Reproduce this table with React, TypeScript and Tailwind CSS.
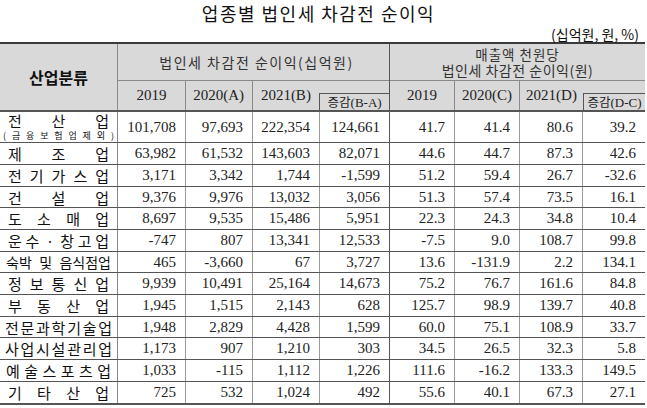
import React from "react";

const KR = '"Noto Sans CJK KR", "Noto Sans", sans-serif';
const NUM = '"Liberation Serif", "Noto Sans CJK KR", serif';

type Row = { label: React.ReactNode; h: number; v: string[] };

const spread = (chars: string[], cls = "px-[8px]") => (
  <div className={`flex w-full justify-between items-center ${cls}`}>
    {chars.map((c, i) => (
      <span key={i}>{c}</span>
    ))}
  </div>
);

const rows: Row[] = [
  {
    label: (
      <div className="flex w-full flex-col">
        {spread(["전", "산", "업"], "px-[8px] text-[15px] h-[17px] leading-[17px]")}
        {spread(["(", "금", "융", "보", "험", "업", "제", "외", ")"], "px-[3px] text-[9px] h-[13px] leading-[13px]")}
      </div>
    ),
    h: 31,
    v: ["101,708", "97,693", "222,354", "124,661", "41.7", "41.4", "80.6", "39.2"],
  },
  { label: spread(["제", "조", "업"]), h: 22, v: ["63,982", "61,532", "143,603", "82,071", "44.6", "44.7", "87.3", "42.6"] },
  { label: spread(["전", "기", "가", "스", "업"]), h: 22, v: ["3,171", "3,342", "1,744", "-1,599", "51.2", "59.4", "26.7", "-32.6"] },
  { label: spread(["건", "설", "업"]), h: 21, v: ["9,376", "9,976", "13,032", "3,056", "51.3", "57.4", "73.5", "16.1"] },
  { label: spread(["도", "소", "매", "업"]), h: 22, v: ["8,697", "9,535", "15,486", "5,951", "22.3", "24.3", "34.8", "10.4"] },
  { label: spread(["운", "수", "ㆍ", "창", "고", "업"]), h: 22, v: ["-747", "807", "13,341", "12,533", "-7.5", "9.0", "108.7", "99.8"] },
  { label: spread(["숙박", "및", "음식점업"], "px-[6px] text-[14px]"), h: 21, v: ["465", "-3,660", "67", "3,727", "13.6", "-131.9", "2.2", "134.1"] },
  { label: spread(["정", "보", "통", "신", "업"]), h: 22, v: ["9,939", "10,491", "25,164", "14,673", "75.2", "76.7", "161.6", "84.8"] },
  { label: spread(["부", "동", "산", "업"]), h: 22, v: ["1,945", "1,515", "2,143", "628", "125.7", "98.9", "139.7", "40.8"] },
  { label: spread(["전", "문", "과", "학", "기", "술", "업"], "px-[5px]"), h: 21, v: ["1,948", "2,829", "4,428", "1,599", "60.0", "75.1", "108.9", "33.7"] },
  { label: spread(["사", "업", "시", "설", "관", "리", "업"], "px-[5px]"), h: 22, v: ["1,173", "907", "1,210", "303", "34.5", "26.5", "32.3", "5.8"] },
  { label: spread(["예", "술", "스", "포", "츠", "업"], "px-[6px]"), h: 22, v: ["1,033", "-115", "1,112", "1,226", "111.6", "-16.2", "133.3", "149.5"] },
  { label: spread(["기", "타", "산", "업"]), h: 23, v: ["725", "532", "1,024", "492", "55.6", "40.1", "67.3", "27.1"] },
];

const W = [68, 67, 67, 70, 65, 65, 63, 62];
const vBorder = (i: number) =>
  i === 3 ? "border-r border-[#555]" : i === 7 ? "" : "border-r border-[#9a9a9a]";

export default function App() {
  return (
    <div className="w-[647px] h-[408px] bg-white overflow-hidden text-[#222]" style={{ fontFamily: KR }}>
      <div className="h-[26px] flex items-center justify-center pr-[10px] text-[18px] tracking-[1.5px] text-[#111]">
        업종별 법인세 차감전 순이익
      </div>
      <div className="h-[16px] flex items-center justify-end pr-[8px] text-[14px] text-[#111]">
        (십억원, 원, %)
      </div>

      <div className="w-[645px] border-t-2 border-[#3a3a3a]">
        {/* header */}
        <div className="flex h-[68px] bg-[#d9d9d9] border-b-2 border-[#555]">
          <div className="w-[118px] shrink-0 border-r border-[#8a8a8a] flex items-center justify-center text-[16px] font-bold text-[#111]">
            산업분류
          </div>
          <div className="w-[272px] shrink-0 flex flex-col border-r border-[#555]">
            <div className="h-[37px] border-b border-[#8a8a8a] flex items-center justify-center pl-[6px] text-[14px] tracking-[1.5px] text-[#333]">
              법인세 차감전 순이익(십억원)
            </div>
            <div className="flex flex-1" style={{ fontFamily: NUM }}>
              <div className="w-[68px] border-r border-[#8a8a8a] flex items-center justify-center text-[15px]">2019</div>
              <div className="w-[67px] border-r border-[#8a8a8a] flex items-center justify-center text-[15px]">2020(A)</div>
              <div className="w-[67px] flex items-center justify-center text-[15px]">2021(B)</div>
              <div className="w-[70px] flex flex-col justify-end">
                <div className="h-[17px] border-t border-l border-[#555] flex items-center justify-center text-[13px] leading-none">
                  <span style={{ fontFamily: KR }} className="text-[12.5px]">증감</span>(B-A)
                </div>
              </div>
            </div>
          </div>
          <div className="w-[255px] shrink-0 flex flex-col">
            <div className="h-[37px] border-b border-[#8a8a8a] flex flex-col items-center justify-center text-[14px] leading-[16px] text-[#333]">
              <div className="text-[13.5px] tracking-[1px]">매출액 천원당</div>
              <div className="tracking-[0.5px]">법인세 차감전 순이익(원)</div>
            </div>
            <div className="flex flex-1" style={{ fontFamily: NUM }}>
              <div className="w-[65px] border-r border-[#8a8a8a] flex items-center justify-center text-[15px]">2019</div>
              <div className="w-[65px] border-r border-[#8a8a8a] flex items-center justify-center text-[15px]">2020(C)</div>
              <div className="w-[63px] flex items-center justify-center text-[15px]">2021(D)</div>
              <div className="w-[62px] flex flex-col justify-end">
                <div className="h-[17px] border-t border-l border-[#555] flex items-center justify-center text-[13px] leading-none">
                  <span style={{ fontFamily: KR }} className="text-[12.5px]">증감</span>(D-C)
                </div>
              </div>
            </div>
          </div>
        </div>

        {/* body */}
        {rows.map((r, ri) => (
          <div
            key={ri}
            className={`flex ${ri === rows.length - 1 ? "border-b-2 border-[#555]" : "border-b border-[#555]"}`}
            style={{ height: r.h }}
          >
            <div className="w-[118px] shrink-0 border-r border-[#8a8a8a] flex items-center text-[15px] leading-none text-[#111]">
              {r.label}
            </div>
            {r.v.map((val, i) => (
              <div
                key={i}
                className={`shrink-0 flex items-center justify-end pr-[9px] text-[15px] leading-none ${vBorder(i)}`}
                style={{ width: W[i], fontFamily: NUM }}
              >
                {val}
              </div>
            ))}
          </div>
        ))}
      </div>
    </div>
  );
}
